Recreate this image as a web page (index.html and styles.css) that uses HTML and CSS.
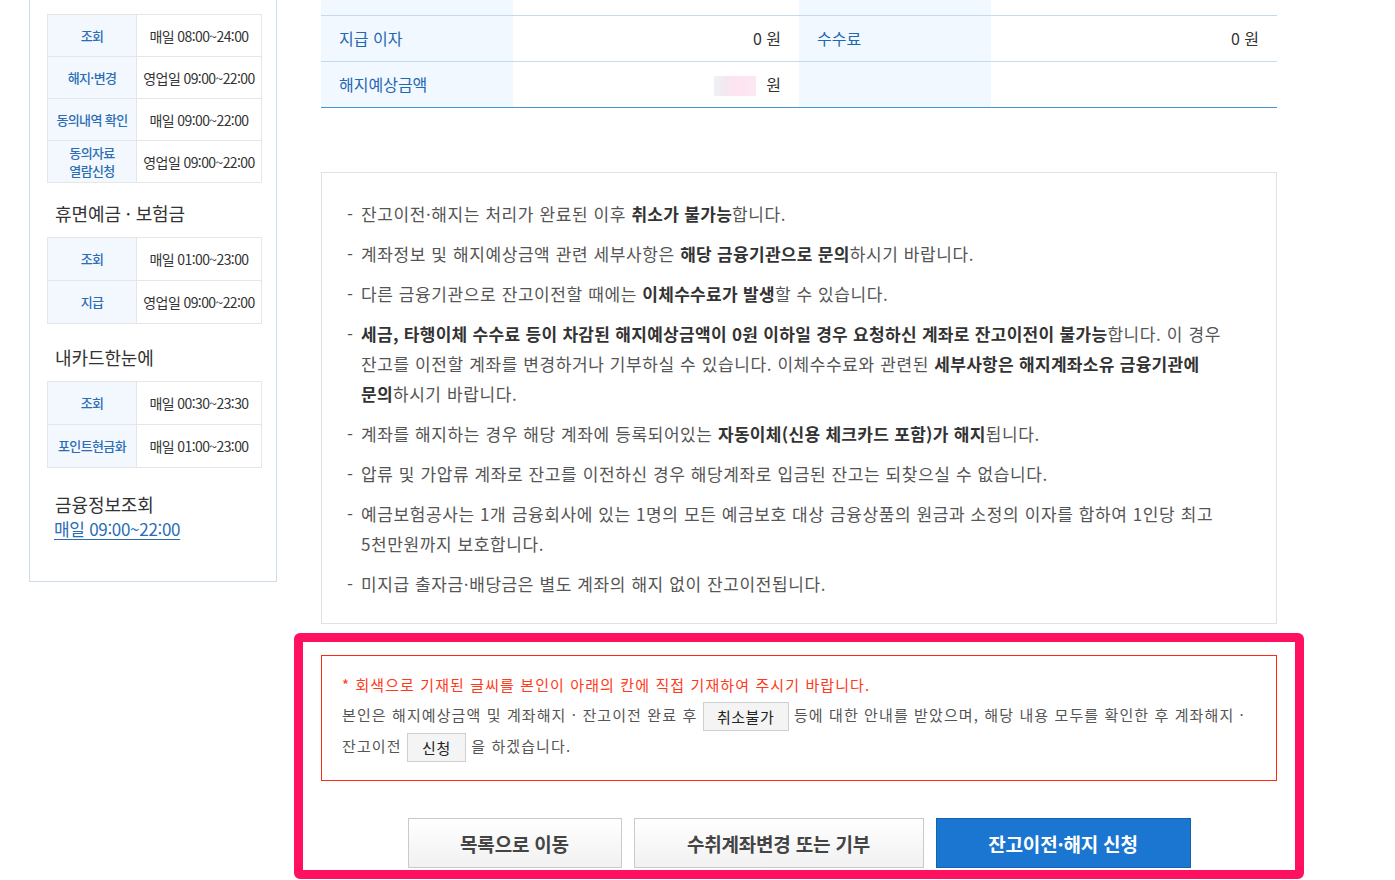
FILE: index.html
```html
<!DOCTYPE html>
<html lang="ko">
<head>
<meta charset="utf-8">
<title>잔고이전·해지 신청</title>
<link rel="stylesheet" href="styles.css">
</head>
<body>
<div class="page">
  <aside class="side">
    <table class="stbl">
      <tr><th>조회</th><td>매일 08:00~24:00</td></tr>
      <tr><th>해지·변경</th><td>영업일 09:00~22:00</td></tr>
      <tr><th>동의내역 확인</th><td>매일 09:00~22:00</td></tr>
      <tr><th class="two">동의자료<br>열람신청</th><td>영업일 09:00~22:00</td></tr>
    </table>
    <h3 class="side-title">휴면예금 · 보험금</h3>
    <table class="stbl t-small">
      <tr><th>조회</th><td>매일 01:00~23:00</td></tr>
      <tr><th>지급</th><td>영업일 09:00~22:00</td></tr>
    </table>
    <h3 class="side-title t2">내카드한눈에</h3>
    <table class="stbl t-small">
      <tr><th>조회</th><td>매일 00:30~23:30</td></tr>
      <tr><th>포인트현금화</th><td>매일 01:00~23:00</td></tr>
    </table>
    <h3 class="side-title last">금융정보조회</h3>
    <a class="side-link" href="#">매일 09:00~22:00</a>
  </aside>

  <main class="main">
    <table class="info">
      <colgroup><col class="c-th"><col class="c-td"><col class="c-th"><col class="c-td"></colgroup>
      <tr class="cut"><th></th><td></td><th></th><td></td></tr>
      <tr><th>지급 이자</th><td>0 원</td><th>수수료</th><td>0 원</td></tr>
      <tr class="last"><th>해지예상금액</th><td><span class="mask"></span> 원</td><th></th><td></td></tr>
    </table>

    <div class="notice">
      <ul>
        <li>잔고이전·해지는 처리가 완료된 이후 <b>취소가 불가능</b>합니다.</li>
        <li>계좌정보 및 해지예상금액 관련 세부사항은 <b>해당 금융기관으로 문의</b>하시기 바랍니다.</li>
        <li>다른 금융기관으로 잔고이전할 때에는 <b>이체수수료가 발생</b>할 수 있습니다.</li>
        <li><b>세금, 타행이체 수수료 등이 차감된 해지예상금액이 0원 이하일 경우 요청하신 계좌로 잔고이전이 불가능</b>합니다. 이 경우<br>잔고를 이전할 계좌를 변경하거나 기부하실 수 있습니다. 이체수수료와 관련된 <b>세부사항은 해지계좌소유 금융기관에<br>문의</b>하시기 바랍니다.</li>
        <li>계좌를 해지하는 경우 해당 계좌에 등록되어있는 <b>자동이체(신용 체크카드 포함)가 해지</b>됩니다.</li>
        <li>압류 및 가압류 계좌로 잔고를 이전하신 경우 해당계좌로 입금된 잔고는 되찾으실 수 없습니다.</li>
        <li>예금보험공사는 1개 금융회사에 있는 1명의 모든 예금보호 대상 금융상품의 원금과 소정의 이자를 합하여 1인당 최고<br>5천만원까지 보호합니다.</li>
        <li>미지급 출자금·배당금은 별도 계좌의 해지 없이 잔고이전됩니다.</li>
      </ul>
    </div>

    <section class="highlight">
      <div class="agree">
        <p class="warn">* 회색으로 기재된 글씨를 본인이 아래의 칸에 직접 기재하여 주시기 바랍니다.</p>
        <p class="agree-text">본인은 해지예상금액 및 계좌해지 · 잔고이전 완료 후 <span class="field f-cancel">취소불가</span> 등에 대한 안내를 받았으며, 해당 내용 모두를 확인한 후 계좌해지 ·<br>잔고이전 <span class="field f-apply">신청</span> 을 하겠습니다.</p>
      </div>
      <div class="btns">
        <button class="btn btn-gray b-list" type="button">목록으로 이동</button>
        <button class="btn btn-gray b-change" type="button">수취계좌변경 또는 기부</button>
        <button class="btn btn-blue b-apply" type="button">잔고이전·해지 신청</button>
      </div>
    </section>
  </main>
</div>
</body>
</html>
```

FILE: styles.css
```css
* { box-sizing: border-box; }
html, body { margin: 0; padding: 0; background: #fff; }
body {
  font-family: "Noto Sans CJK KR", "Noto Sans", sans-serif;
  color: #555;
  overflow: hidden;
}
.page {
  display: flex;
  align-items: flex-start;
  padding-left: 29px;
  gap: 44px;
}

/* sidebar */
.side {
  width: 248px;
  flex: none;
  border: 1px solid #cddcec;
  border-top: none;
  padding: 14px 14px 40px 17px;
}
.stbl {
  width: 215px;
  border-collapse: collapse;
  table-layout: fixed;
}
.stbl th, .stbl td {
  border: 1px solid #e6e6e6;
  height: 42px;
  padding: 0;
  text-align: center;
  vertical-align: middle;
}
.stbl.t-small th, .stbl.t-small td { height: 43px; }
.stbl th {
  width: 89px;
  background: #f2f8fe;
  color: #2c6db5;
  font-size: 13px;
  font-weight: 500;
  letter-spacing: -0.6px;
  line-height: 18px;
}
.stbl td {
  color: #333;
  font-size: 14px;
  letter-spacing: -0.6px;
}
.side-title {
  margin: 18px 0 12px 8px;
  font-size: 18px;
  font-weight: 400;
  line-height: 24px;
  color: #333;
  letter-spacing: -0.1px;
}
.side-title.t2 { margin-top: 21px; }
.side-title.last { margin: 24px 0 1px 8px; }
.side-link {
  display: inline-block;
  margin-left: 7px;
  font-size: 17px;
  line-height: 24px;
  color: #2a6db5;
  text-decoration: underline;
  text-underline-offset: 3px;
  letter-spacing: -0.3px;
}

/* main */
.main {
  width: 956px;
  flex: none;
}
.info {
  width: 956px;
  border-collapse: collapse;
  table-layout: fixed;
}
.c-th { width: 192px; }
.c-td { width: 286px; }
.info th, .info td {
  height: 46px;
  padding: 0 18px;
  border-bottom: 1px solid #c6daee;
  font-size: 16px;
  vertical-align: middle;
}
.info th {
  background: #f2f8ff;
  color: #1f68b2;
  font-weight: 400;
  text-align: left;
}
.info td {
  color: #333;
  text-align: right;
}
.info tr.cut th, .info tr.cut td { height: 15px; }
.info tr.last th, .info tr.last td { border-bottom: 1px solid #4395d2; }
.mask {
  display: inline-block;
  width: 42px;
  height: 20px;
  vertical-align: middle;
  background: linear-gradient(90deg, #eef2f8 0%, #f5e6f0 30%, #fde4f0 60%, #fbe8f2 100%);
  margin-right: 6px;
}

.notice {
  margin-top: 64px;
  border: 1px solid #e2e2e2;
  padding: 26px 16px 24px 25px;
}
.notice ul {
  margin: 0;
  padding: 0;
  list-style: none;
}
.notice li {
  font-size: 17px;
  line-height: 30px;
  padding-left: 14px;
  margin-bottom: 10px;
  color: #555;
  letter-spacing: 0.6px;
}
.notice li:last-child { margin-bottom: 0; }
.notice li::before {
  content: "-";
  display: inline-block;
  width: 14px;
  margin-left: -14px;
  letter-spacing: 0;
}
.notice b { color: #333; font-weight: 700; letter-spacing: 0.3px; }

/* highlight frame */
.highlight {
  margin: 9px -27px 0;
  border: 9px solid #ff1060;
  border-radius: 6px;
  padding: 13px 18px 2px;
}
.agree {
  border: 1px solid #ff2a14;
  padding: 14px 18px 18px 20px;
}
.agree p {
  margin: 0;
  font-size: 15px;
  line-height: 30px;
  letter-spacing: 1.1px;
  white-space: nowrap;
}
.warn { color: #ff3a1a; }
.agree-text { color: #555; }
.field {
  display: inline-block;
  height: 29px;
  line-height: 27px;
  border: 1px solid #cfcfcf;
  background: #f4f4f4;
  color: #222;
  text-align: center;
  vertical-align: middle;
  letter-spacing: 0.5px;
}
.f-cancel { width: 86px; }
.f-apply { width: 59px; }

.btns {
  margin-top: 37px;
  display: flex;
  justify-content: center;
  gap: 12px;
}
.btn {
  height: 50px;
  padding: 0;
  font-family: "Noto Sans CJK KR", "Noto Sans", sans-serif;
  font-size: 19px;
  font-weight: 700;
  letter-spacing: -0.2px;
  cursor: pointer;
}
.btn-gray {
  border: 1px solid #cacaca;
  background: linear-gradient(#ffffff, #f1f1f1);
  color: #444;
}
.btn-blue {
  border: 1px solid #1464ad;
  background: #1a76d0;
  color: #fff;
}
.b-list { width: 214px; }
.b-change { width: 290px; }
.b-apply { width: 255px; }
```
